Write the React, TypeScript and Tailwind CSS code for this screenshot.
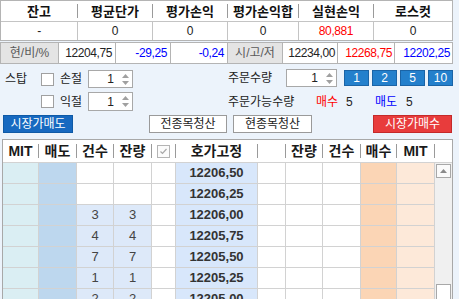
import React from "react";

function Arrows() {
  return (
    <div className="flex w-[13px] flex-col items-center justify-center gap-[3px]">
      <svg width="7" height="4" viewBox="0 0 7 4">
        <path d="M3.5 0L7 4H0z" fill="#a0a0a0" />
      </svg>
      <svg width="7" height="4" viewBox="0 0 7 4">
        <path d="M0 0H7L3.5 4z" fill="#a0a0a0" />
      </svg>
    </div>
  );
}

function Spin({ className }: { className: string }) {
  return (
    <div className={`flex shrink-0 items-center border border-[#a8a8a8] bg-white ${className}`}>
      <span className="flex-1 pr-[5px] text-right text-[12px] leading-none text-[#222]">1</span>
      <Arrows />
    </div>
  );
}

function Check({ className = "" }: { className?: string }) {
  return <div className={`h-[13px] w-[13px] shrink-0 border border-[#a0a0a0] bg-white ${className}`} />;
}

const topHead = ["잔고", "평균단가", "평가손익", "평가손익합", "실현손익", "로스컷"];
const topVals: { v: string; c: string }[] = [
  { v: "-", c: "text-[#222]" },
  { v: "0", c: "text-[#222]" },
  { v: "0", c: "text-[#222]" },
  { v: "0", c: "text-[#222]" },
  { v: "80,881", c: "text-[#ff0000]" },
  { v: "0", c: "text-[#222]" },
];

const rows = [
  { p: "12206,50", n: "" },
  { p: "12206,25", n: "" },
  { p: "12206,00", n: "3" },
  { p: "12205,75", n: "4" },
  { p: "12205,50", n: "7" },
  { p: "12205,25", n: "1" },
  { p: "12205,00", n: "2" },
];

const gridHead = ["MIT", "매도", "건수", "잔량", "CHECK", "호가고정", "", "잔량", "건수", "매수", "MIT"];

function HeadSep() {
  return <span className="h-[14px] w-px shrink-0 bg-[#9a9a9a]" />;
}

export default function App() {
  const cell = "h-[21px] border-r border-b border-[#d2d2d2] flex items-center justify-center";
  return (
    <div className="h-[299px] w-[459px] overflow-hidden whitespace-nowrap bg-[#ecf3fb] font-[family-name:'Liberation_Sans','Noto_Sans_CJK_KR',sans-serif] text-[#222]">
      {/* top summary table */}
      <div className="w-[453px] border border-[#b4b4b4] bg-white">
        <div className="grid h-[21px] grid-cols-[77px_75px_75px_71px_75px_78px] border-b border-[#c4c4c4]">
          {topHead.map((h, i) => (
            <div key={i} className="flex items-center">
              <span className="flex-1 text-center text-[13px] font-bold leading-none text-[#111]">{h}</span>
              {i < 5 && <HeadSep />}
            </div>
          ))}
        </div>
        <div className="grid h-[18px] grid-cols-[77px_75px_75px_71px_75px_78px]">
          {topVals.map((d, i) => (
            <div
              key={i}
              className={`flex items-center justify-center text-[12px] leading-none tracking-[-0.4px] ${d.c} ${i < 5 ? "border-r border-[#c4c4c4]" : ""}`}
            >
              {d.v}
            </div>
          ))}
        </div>
      </div>

      {/* price row */}
      <div className="mt-px grid h-[22px] w-[453px] grid-cols-[58px_57px_55px_57px_55px_55px_57px_57px] border border-[#b4b4b4] bg-white text-[12px] leading-none">
        <div className="flex items-center justify-center border-r border-[#b4b4b4] bg-[#e4e4e4] text-[#5a5a5a]">현/비/%</div>
        <div className="flex items-center justify-end border-r border-[#b4b4b4] pr-[3px] tracking-[-0.4px] text-[#222]">12204,75</div>
        <div className="flex items-center justify-end border-r border-[#b4b4b4] pr-[3px] tracking-[-0.4px] text-[#0000ff]">-29,25</div>
        <div className="flex items-center justify-end border-r border-[#b4b4b4] pr-[3px] tracking-[-0.4px] text-[#0000ff]">-0,24</div>
        <div className="flex items-center justify-center border-r border-[#b4b4b4] bg-[#e4e4e4] text-[#5a5a5a]">시/고/저</div>
        <div className="flex items-center justify-end border-r border-[#b4b4b4] pr-[2px] tracking-[-0.4px] text-[#222]">12234,00</div>
        <div className="flex items-center justify-end border-r border-[#b4b4b4] pr-[2px] tracking-[-0.4px] text-[#ff0000]">12268,75</div>
        <div className="flex items-center justify-end pr-[2px] tracking-[-0.4px] text-[#0000ff]">12202,25</div>
      </div>

      {/* row A */}
      <div className="mt-[5px] flex h-[20px] items-center text-[12px] leading-none">
        <div className="flex h-full w-[228px] shrink-0 items-center">
          <span className="ml-[5px] w-[36px] shrink-0">스탑</span>
          <Check />
          <span className="ml-[6px] w-[24px] shrink-0">손절</span>
          <Spin className="ml-[4px] h-[18px] w-[45px]" />
        </div>
        <div className="flex h-full items-start">
          <span className="flex h-[18px] w-[58px] shrink-0 items-center">주문수량</span>
          <Spin className="h-[18px] w-[51px]" />
          <div className="ml-[7px] mt-px flex gap-[3px]">
            {["1", "2", "5", "10"].map((b) => (
              <div
                key={b}
                className="flex h-[16px] w-[25px] items-center justify-center border border-[#1b64a6] bg-[#2480cc] text-[12px] leading-none text-white"
              >
                {b}
              </div>
            ))}
          </div>
        </div>
      </div>

      {/* row B */}
      <div className="mt-[3px] flex h-[19px] items-center text-[12px] leading-none">
        <div className="flex h-full w-[228px] shrink-0 items-center">
          <Check className="ml-[41px]" />
          <span className="ml-[6px] w-[24px] shrink-0">익절</span>
          <Spin className="ml-[4px] h-[19px] w-[45px]" />
        </div>
        <span className="w-[88px] shrink-0">주문가능수량</span>
        <span className="w-[30px] shrink-0 text-[#ff0000]">매수</span>
        <span className="w-[29px] shrink-0">5</span>
        <span className="w-[31px] shrink-0 text-[#0000ff]">매도</span>
        <span>5</span>
      </div>

      {/* row C */}
      <div className="mt-[4px] flex h-[18px] text-[12px] leading-none">
        <div className="ml-[3px] flex w-[70px] items-center justify-center border border-[#0f5aa6] bg-[#1769c0] text-white">시장가매도</div>
        <div className="ml-[76px] flex w-[78px] items-center justify-center border border-[#9a9a9a] bg-white text-[#222]">전종목청산</div>
        <div className="ml-[6px] flex w-[79px] items-center justify-center border border-[#9a9a9a] bg-white text-[#222]">현종목청산</div>
        <div className="ml-[61px] flex w-[79px] items-center justify-center border border-[#c42a2a] bg-[#e83c3c] text-white">시장가매수</div>
      </div>

      {/* order grid */}
      <div className="ml-[2px] mt-[6px] w-[451px] border-l border-t border-r border-[#a8a8a8] bg-white">
        <div className="grid h-[23px] grid-cols-[36px_38px_37px_38px_24px_82px_28px_37px_38px_36px_38px_17px] border-b border-[#d2d2d2]">
          {gridHead.map((h, i) => (
            <div key={i} className="flex items-center">
              <span className="flex flex-1 items-center justify-center text-[14px] font-bold leading-none text-[#1a1a1a]">
                {h === "CHECK" ? (
                  <svg width="13" height="13" viewBox="0 0 13 13">
                    <rect x="0.5" y="0.5" width="12" height="12" fill="#fbfbfb" stroke="#b4b4b4" />
                    <path d="M3.5 6.5L5.5 8.5L9.5 4" fill="none" stroke="#a8a8a8" strokeWidth="1.2" />
                  </svg>
                ) : (
                  h
                )}
              </span>
              <HeadSep />
            </div>
          ))}
          <div />
        </div>
        <div className="flex">
          <div className="grid grid-cols-[36px_38px_37px_38px_24px_82px_28px_37px_38px_36px_38px]">
            {rows.map((r, i) => (
              <React.Fragment key={i}>
                <div className={`${cell} bg-[#daeef3]`} />
                <div className={`${cell} bg-[#bdd7ee]`} />
                <div className={`${cell} text-[13px] text-[#444] ${r.n ? "bg-[#dde9f9]" : "bg-white"}`}>{r.n}</div>
                <div className={`${cell} text-[13px] text-[#444] ${r.n ? "bg-[#dde9f9]" : "bg-white"}`}>{r.n}</div>
                <div className={`${cell} bg-white`} />
                <div className={`${cell} bg-[#d8e7fb] text-[13px] font-bold text-[#333]`}>{r.p}</div>
                <div className={`${cell} bg-white`} />
                <div className={`${cell} bg-white`} />
                <div className={`${cell} bg-white`} />
                <div className={`${cell} bg-[#fbd5b5]`} />
                <div className={`${cell} bg-[#fde9d9]`} />
              </React.Fragment>
            ))}
          </div>
          <div className="flex w-[17px] flex-col bg-[#f0f0f0]">
            <div className="ml-px mt-px flex h-[14px] w-[15px] items-center justify-center border border-[#a8a8a8] bg-[#fafafa]">
              <svg width="7" height="4" viewBox="0 0 7 4">
                <path d="M3.5 0L7 4H0z" fill="#8a8a8a" />
              </svg>
            </div>
            <div className="ml-px mt-[106px] h-[20px] w-[15px] border border-[#a8a8a8] bg-white" />
          </div>
        </div>
      </div>
    </div>
  );
}
